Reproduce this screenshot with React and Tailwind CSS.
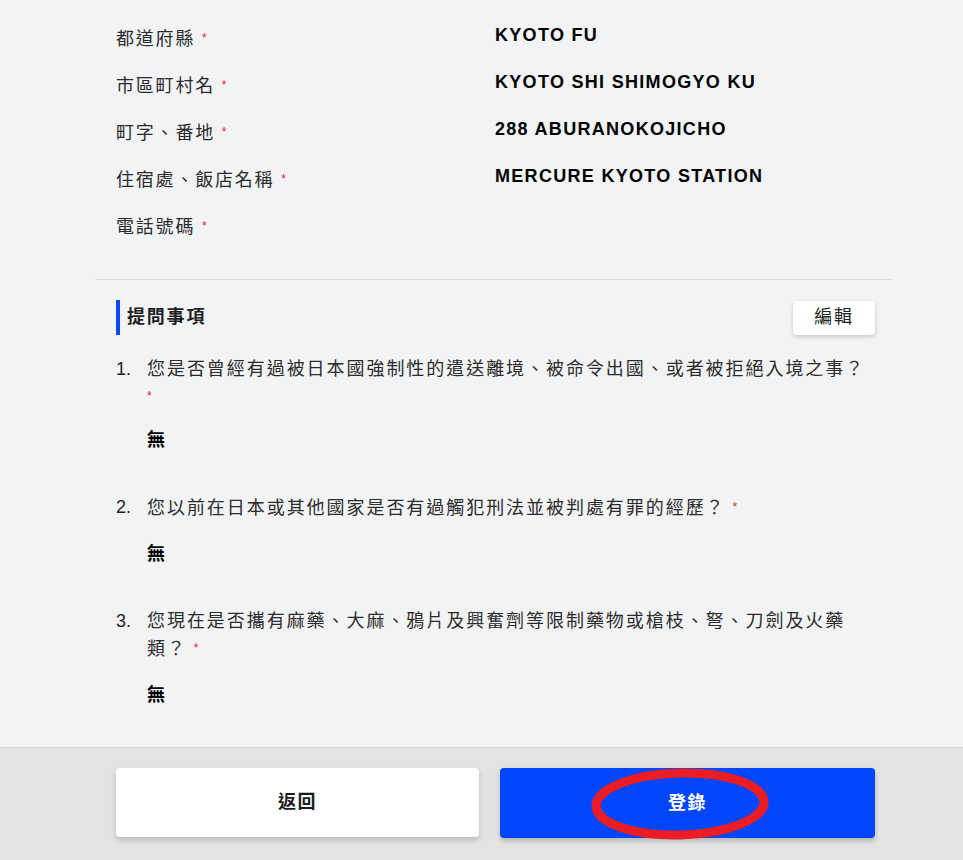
import React from "react";

const addressRows = [
  { label: "都道府縣", value: "KYOTO FU" },
  { label: "市區町村名", value: "KYOTO SHI SHIMOGYO KU" },
  { label: "町字、番地", value: "288 ABURANOKOJICHO" },
  { label: "住宿處、飯店名稱", value: "MERCURE KYOTO STATION" },
  { label: "電話號碼", value: "" },
];

const questions = [
  "您是否曾經有過被日本國強制性的遣送離境、被命令出國、或者被拒絕入境之事？",
  "您以前在日本或其他國家是否有過觸犯刑法並被判處有罪的經歷？",
  "您現在是否攜有麻藥、大麻、鴉片及興奮劑等限制藥物或槍枝、弩、刀劍及火藥類？",
];

const font = "font-['Liberation_Sans','Noto_Sans_CJK_TC',sans-serif]";

function Required() {
  return (
    <span className="text-[#e0262d] text-[12px] align-[3px] tracking-normal">*</span>
  );
}

export default function App() {
  return (
    <div className={`min-h-[860px] bg-[#f2f3f5] flex flex-col ${font}`}>
      <div className="ml-[95px] w-[798px]">
        {/* address */}
        <div className="pt-[24px] pb-[20px] pl-[21px]">
          {addressRows.map((row) => (
            <div key={row.label} className="flex items-start h-[47px]">
              <div className="w-[379px] text-[18px] leading-[28px] tracking-[1.8px] text-[#2b2b2b]">
                {row.label} <Required />
              </div>
              <div className="text-[18px] leading-[22px] font-bold tracking-[1.3px] text-black">
                {row.value}
              </div>
            </div>
          ))}
        </div>

        <div className="h-px bg-[#dcdde0]" />

        {/* questions */}
        <div className="pl-[21px] pr-[18px] pt-[20px]">
          <div className="flex items-center justify-between h-[35px]">
            <div className="flex items-center h-full">
              <div className="w-[4px] h-full bg-[#0a47ff]" />
              <h3 className="ml-[7px] text-[18px] font-bold tracking-[1.8px] text-[#1f1f1f]">
                提問事項
              </h3>
            </div>
            <button className="w-[82px] h-[34px] bg-white rounded-[4px] shadow-[0_2px_4px_rgba(0,0,0,0.18)] text-[18px] tracking-[1.8px] text-[#222]">
              編輯
            </button>
          </div>

          <div className="pt-[21px] pb-[38px] flex flex-col gap-[40px]">
            {questions.map((q, i) => (
              <div key={i}>
                <div className="flex">
                  <div className="w-[31px] shrink-0 text-[18px] leading-[27px] text-[#222]">
                    {i + 1}.
                  </div>
                  <p className="max-w-[722px] text-[18px] leading-[27px] tracking-[1.95px] text-[#2b2b2b]">
                    {q} <Required />
                  </p>
                </div>
                <div
                  className={`${i === 0 ? "mt-[16px]" : "mt-[19px]"} pl-[31px] text-[18px] leading-[27px] font-bold text-black`}
                >
                  無
                </div>
              </div>
            ))}
          </div>
        </div>
      </div>

      {/* footer */}
      <div className="flex-1 bg-[#e2e3e5] border-t border-[#d6d7d9] pt-[20px] pb-[22px]">
        <div className="ml-[116px] w-[759px] flex gap-[21px]">
          <button className="w-[363px] h-[69px] bg-white rounded-[4px] shadow-[0_3px_5px_rgba(0,0,0,0.18)] text-[18px] font-bold tracking-[1.5px] text-[#1a1a1a]">
            返回
          </button>
          <div className="relative flex-1">
            <button className="w-full h-[70px] bg-[#0046ff] rounded-[4px] shadow-[0_3px_5px_rgba(0,0,0,0.2)] text-[18px] font-bold tracking-[1.5px] text-white">
              登錄
            </button>
            <svg
              className="absolute left-[90px] top-[-1px] pointer-events-none"
              width="182"
              height="74"
              viewBox="0 0 182 74"
            >
              <ellipse
                cx="90"
                cy="37"
                rx="84"
                ry="31"
                fill="none"
                stroke="#ec1c24"
                strokeWidth="9"
                transform="rotate(-1.5 90 37)"
              />
            </svg>
          </div>
        </div>
      </div>
    </div>
  );
}
